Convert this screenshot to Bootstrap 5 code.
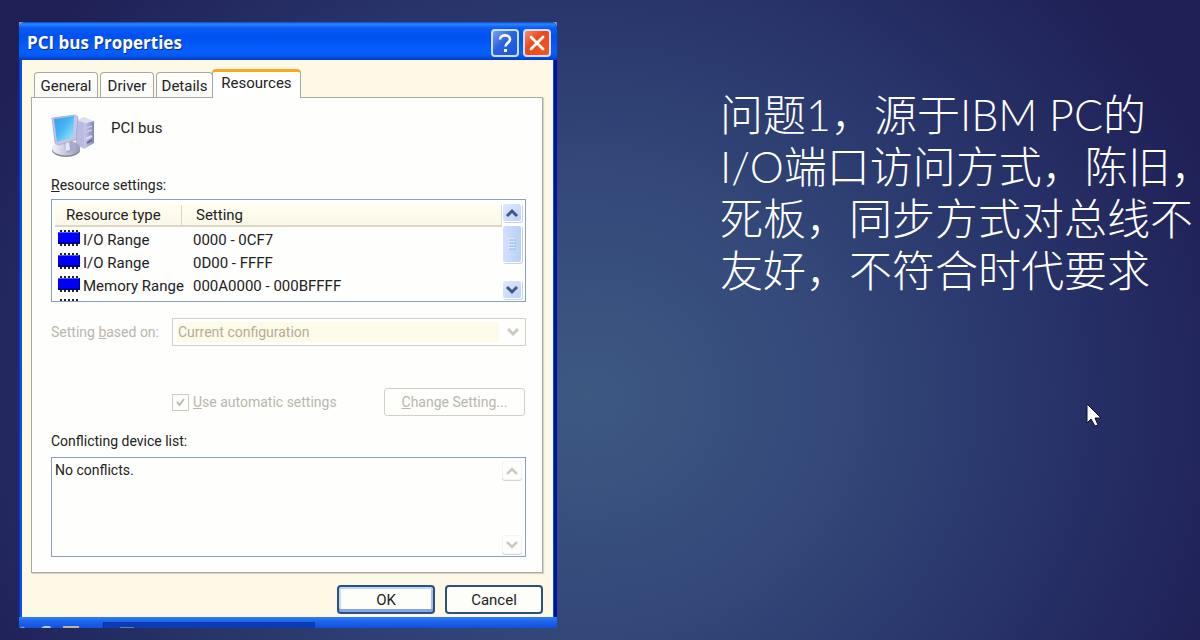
<!DOCTYPE html>
<html lang="zh-CN">
<head>
<meta charset="utf-8">
<meta name="viewport" content="width=device-width, initial-scale=1">
<title>PCI bus Properties</title>
<link rel="stylesheet" href="https://cdn.jsdelivr.net/npm/bootstrap@5.3.0/dist/css/bootstrap.min.css">
<style>
body{font-family:Roboto,"Noto Sans CJK SC",sans-serif;font-size:14px;line-height:20px;color:#222;min-height:100vh;
 background:radial-gradient(ellipse 56% 95% at 49% 62%,#3d5982 0%,#34497a 35%,#28346a 68%,#1f2056 100%) #1f2056}
.slide{display:grid;grid-template-columns:minmax(0,557fr) minmax(0,643fr);min-height:100vh}
.dialog-wrap{padding:22px 0 12px 19px}
.xp-frame{background:#0a50e8;box-shadow:inset 1px 0 #0a35d0,inset -3px 0 #0010a0;border-radius:7px 7px 0 0}
.xp-back{background:#6f8fd0}
.xp-title{height:38px;padding:4px 6px 0 8px;border-radius:7px 7px 0 0;color:#fff;
 background:linear-gradient(#0a48c8 0,#2a86ff 2px,#0a5cf4 6px,#0050f0 14px,#0560ff 30px,#0458f4 34px,#0838b8 38px);text-shadow:1px 1px #0a2a90}
.xp-title h1{font:bold 17px/24px "Open Sans","Noto Sans",sans-serif;margin:0}
.cap-btn{width:28px;height:28px;border:2px solid #cfe0ff;border-radius:4px;padding:0;display:flex;align-items:center;justify-content:center;background:linear-gradient(135deg,#7aa0f5,#2a62e0 45%,#1c55dd)}
.cap-close{background:linear-gradient(135deg,#f09070,#ea4a1c 40%,#f4561a)}
.xp-body{margin:0 4px 0 3px;padding:9px 10px 3px 9px;background:#fdf9e6}
.xp-tabs{border:0;padding-left:3px;align-items:flex-end;gap:2px;font-size:15px}
.xp-tabs .nav-link{border:1px solid #a9a9a2;border-bottom:0;border-radius:4px 4px 0 0;background:linear-gradient(#fff,#fafaf6);color:#222;padding:3px 0 1px;height:25px;margin:0;text-align:center}
.xp-tabs .nav-link.active{height:29px;margin:0 0 -1px -3px;border:1px solid #a9a9a2;border-top:3px solid #f8a81c;border-bottom:0;background:#fff;padding:1px 0 4px;color:#222;position:relative}
.w-a{width:64px}.w-b{width:54px}.w-c{width:57px}.w-d{width:89px}
.xp-panel{background:#fefefd;border:1px solid #a9a9a2;box-shadow:1px 1px 1px #d8d4c8;padding:15px 16px 15px 19px}
.dev-row{height:62px}
.dev-name{padding:5px 0 0 15px;font-size:15px}
.list-box{border:1px solid #8a9fc4;height:103px;overflow:hidden;background:#fefefd;font-size:15px}
.res-table{width:100%;table-layout:fixed;border-collapse:separate;border-spacing:0;margin:2px 0 0 3px}
.col-kind{width:127px}
.res-table th{font-weight:400;height:25px;padding:2px 0 0 14px;background:linear-gradient(#fffef2,#fbf8e8);border-bottom:2px solid #dcd8c4}
.res-table th:first-child{padding-left:11px}
.res-table th span{display:block;border-right:1px solid #dcd8c8;line-height:20px}
.res-table td{height:23px;padding:2px 0 0 11px;white-space:nowrap;line-height:20px}
.res-table td:first-child{padding-left:3px}
.chip{width:22px;height:18px;display:inline-block;vertical-align:-2px;margin-right:3px}
.sb{width:21px;margin:3px 2px 2px 0}
.sb-btn{width:20px;height:19px;padding:0;border:1px solid #fff;border-radius:3px;background:linear-gradient(135deg,#dfe9ff,#bcd2fb);box-shadow:1px 1px #c4d4f0;display:flex;align-items:center;justify-content:center}
.sb-thumb{height:38px;margin-top:3px;background:linear-gradient(90deg,#d2e0fd,#b8d0fa)}
.sb-off{background:#fdfdfb;border-color:#f5f4f0;box-shadow:0 1px #d8d6cc}
.off-text{color:#b9b7ac}
.based-label{width:121px}
.combo{flex:1;height:28px;border:1px solid #d4d1c4;padding:3px 26px 3px 5px;font:inherit;color:#b3ae96;opacity:1;appearance:none;border-radius:0;
 background:url("data:image/svg+xml,%3Csvg xmlns='http://www.w3.org/2000/svg' viewBox='0 0 12 8'%3E%3Cpath d='M1 1l5 5 5-5' fill='none' stroke='%23cbc9c0' stroke-width='3'/%3E%3C/svg%3E") right 6px center/12px 8px no-repeat,linear-gradient(#fdfaea,#fdfaea) 4px 3px/calc(100% - 30px) 20px no-repeat,#fefefd}
.auto-row{margin:42px 1px 0 121px}
.tick{appearance:none;width:17px;height:17px;margin:0 4px 0 0;border:1px solid #cfcdc2;background:url("data:image/svg+xml,%3Csvg xmlns='http://www.w3.org/2000/svg' viewBox='0 0 11 11'%3E%3Cpath d='M2 5l2.500 3L9 2' fill='none' stroke='%23bdbbb0' stroke-width='2'/%3E%3C/svg%3E") center/11px no-repeat}
.change-btn{width:141px;height:28px;border:1px solid #d4d1c4;border-radius:3px;background:#fefefc;color:#b9b7ac;padding:0}
.conf-label{margin:15px 0 6px}
.conf-box{border:1px solid #8a9fc4;height:100px;background:#fefefd}
.conf-box textarea{border:0;resize:none;background:none;padding:2px 3px;overflow:hidden;font:inherit;line-height:20px;color:#222}
.ok-row{gap:10px;padding:12px 0 0}
.dlg-btn{width:98px;height:29px;padding:0;border:2px solid #2c5080;border-radius:4px;background:#fdfdfa;color:#222;font-size:15px}
.dlg-ok{box-shadow:inset 0 2px #bcd8fa,inset 0 -3px #88a4ec,inset 2px 0 #c4dafa,inset -2px 0 #a4bcf0}
.taskbar-strip{height:11px;background:linear-gradient(#2f80f8,#1e66ee 4px,#1250dc);overflow:hidden}
.task-item{width:212px;height:7px;margin:5px 0 0 12px;background:#0a3cb4;border-left:1px solid #082c90}
.copy{padding:89px 0 0 163px;color:#fff}
.copy p{font-family:Lato,"Noto Sans CJK SC",sans-serif;font-weight:300;font-size:43px;line-height:52px;white-space:nowrap;margin:0}
.line-end{font-feature-settings:"halt"}
.pointer{position:absolute;left:90.5%;top:403px;width:15px;height:25px}
</style>
</head>
<body>
<main class="slide">
<section class="dialog-wrap">
 <div class="xp-back">
 <div class="xp-frame">
  <header class="xp-title d-flex align-items-center">
   <h1 class="flex-grow-1">PCI bus Properties</h1>
   <div class="d-flex gap-1">
   <button class="cap-btn" aria-label="Help"><svg width="18" height="20" viewBox="0 0 18 20"><path d="M4 6.500C4 1 14 1 14 6.500c0 3-4.500 3.500-4.500 7" fill="none" stroke="#fff" stroke-width="2.600"/><rect x="8" y="16" width="3" height="3" fill="#fff"/></svg></button>
   <button class="cap-btn cap-close" aria-label="Close"><svg width="18" height="18" viewBox="0 0 18 18"><path d="M3 3l12 12M15 3L3 15" stroke="#fff" stroke-width="2.800" stroke-linecap="round"/></svg></button>
   </div>
  </header>
  <div class="xp-body">
   <ul class="nav nav-tabs xp-tabs">
    <li><a class="nav-link w-a" href="#">General</a></li>
    <li><a class="nav-link w-b" href="#">Driver</a></li>
    <li><a class="nav-link w-c" href="#">Details</a></li>
    <li><a class="nav-link active w-d" href="#">Resources</a></li>
   </ul>
   <div class="xp-panel">
    <div class="dev-row d-flex align-items-start">
     <svg width="45" height="46" viewBox="0 0 45 44">
      <defs><linearGradient id="scr" x2="1" y2="1"><stop stop-color="#3b9de8"/><stop offset=".45" stop-color="#45b4f4"/><stop offset="1" stop-color="#a4f0fa"/></linearGradient>
      <linearGradient id="twr"><stop stop-color="#c9cbea"/><stop offset="1" stop-color="#8284b8"/></linearGradient>
      <linearGradient id="ft"><stop stop-color="#f4f4fa"/><stop offset="1" stop-color="#9698be"/></linearGradient></defs>
      <path d="M26 6l7-3 10 4-9 4z" fill="#dedff2"/><path d="M25 6l9 3v26l-9-4z" fill="#b9bbe0"/><path d="M33 10l10-3v22l-10 6z" fill="url(#twr)"/>
      <path d="M35 14l6-2M35 18l6-2" stroke="#c6c8ea" stroke-width="1.500"/><path d="M35 25l6-3" stroke="#dadcf4" stroke-width="2"/><path d="M36 29l5-3" stroke="#5d5f93" stroke-width="1.500"/>
      <ellipse cx="15" cy="36" rx="14" ry="7" fill="#85868f"/><ellipse cx="15" cy="34" rx="14" ry="7.500" fill="url(#ft)"/>
      <path d="M12 26l9-1 2 11-7 3z" fill="#a6a8cf"/><path d="M14 27l4-1 1 10-4 1z" fill="#e5e6f4"/>
      <path d="M1 4l23-3 3 2-2 23-18 5-3-2z" fill="#c3c6e4" stroke="#a1a4c6" stroke-width=".7"/><path d="M3 5l20-3-1 21-16 5z" fill="url(#scr)"/>
     </svg>
     <span class="dev-name">PCI bus</span>
    </div>
    <label class="d-block mb-1"><u>R</u>esource settings:</label>
    <div class="list-box d-flex">
     <table class="res-table">
      <colgroup><col class="col-kind"><col></colgroup>
      <thead><tr><th><span>Resource type</span></th><th><span>Setting</span></th></tr></thead>
      <tbody>
       <tr><td><svg class="chip"><use href="#chip"/></svg>I/O Range</td><td>0000 - 0CF7</td></tr>
       <tr><td><svg class="chip"><use href="#chip"/></svg>I/O Range</td><td>0D00 - FFFF</td></tr>
       <tr><td><svg class="chip"><use href="#chip"/></svg>Memory Range</td><td>000A0000 - 000BFFFF</td></tr>
       <tr><td><svg class="chip"><use href="#chip"/></svg></td><td></td></tr>
      </tbody>
     </table>
     <div class="sb d-flex flex-column flex-shrink-0">
      <button class="sb-btn" aria-label="Scroll up"><svg width="14" height="10" viewBox="0 0 14 10"><path d="M2 8l5-5 5 5" fill="none" stroke="#3f5888" stroke-width="3"/></svg></button>
      <div class="sb-btn sb-thumb"><svg width="10" height="12" viewBox="0 0 10 12"><path d="M1 1h7M1 4h7M1 7h7M1 10h7" stroke="#f2f7ff"/><path d="M2 2h7M2 5h7M2 8h7M2 11h7" stroke="#95b4ea"/></svg></div>
      <button class="sb-btn mt-auto" aria-label="Scroll down"><svg width="14" height="10" viewBox="0 0 14 10"><path d="M2 2l5 5 5-5" fill="none" stroke="#3f5888" stroke-width="3"/></svg></button>
     </div>
    </div>
    <div class="d-flex align-items-center mt-3">
     <label class="off-text based-label" for="based">Setting <u>b</u>ased on:</label>
     <select id="based" class="combo" disabled><option>Current configuration</option></select>
    </div>
    <div class="d-flex align-items-center justify-content-between auto-row">
     <label class="off-text d-flex align-items-center" for="auto"><input id="auto" class="tick" type="checkbox" checked disabled><span><u>U</u>se automatic settings</span></label>
     <button class="change-btn" disabled><u>C</u>hange Setting...</button>
    </div>
    <label class="d-block conf-label" for="conf">Conflicting device list:</label>
    <div class="conf-box d-flex">
     <textarea id="conf" class="flex-grow-1" readonly>No conflicts.</textarea>
     <div class="sb d-flex flex-column">
      <button class="sb-btn sb-off" disabled aria-label="Scroll up"><svg width="14" height="10" viewBox="0 0 14 10"><path d="M2 8l5-5 5 5" fill="none" stroke="#cccac2" stroke-width="2.500"/></svg></button>
      <button class="sb-btn sb-off mt-auto" disabled aria-label="Scroll down"><svg width="14" height="10" viewBox="0 0 14 10"><path d="M2 2l5 5 5-5" fill="none" stroke="#cccac2" stroke-width="2.500"/></svg></button>
     </div>
    </div>
   </div>
   <div class="d-flex justify-content-end ok-row">
    <button class="dlg-btn dlg-ok">OK</button>
    <button class="dlg-btn">Cancel</button>
   </div>
  </div>
  <div class="taskbar-strip d-flex">
   <svg width="72" height="11" viewBox="0 0 72 11"><path d="M22 11l3-2h6l1 2z" fill="#a8ccff"/><path d="M1 11q3-3 5 0" fill="#6fa4f4"/><rect x="44" y="9" width="16" height="3" fill="#b8b6a8"/></svg>
   <div class="task-item"><svg width="30" height="7" class="d-block"><rect x="16" y="5" width="14" height="2" fill="#5c7cb0"/></svg></div>
  </div>
 </div>
 </div>
</section>
<section class="copy">
 <p>问题1，源于IBM PC的<br>I/O端口访问方式，陈旧<span class="line-end">，</span><br>死板，同步方式对总线不<br>友好，不符合时代要求</p>
</section>
</main>
<svg class="pointer" viewBox="0 0 15 25"><path d="M1 1v19l4-4 4 7 3-1-3-7h6z" fill="#fff" stroke="#0c1030"/></svg>
<svg width="0" height="0" class="position-absolute"><symbol id="chip" viewBox="0 0 22 18"><path d="M3 1v16M7 1v16M11 1v16M15 1v16M19 1v16" stroke="#222" stroke-width="2"/><rect x="0" y="3" width="22" height="12" fill="#000090"/><rect x="0" y="3" width="21" height="10" fill="#0000fa"/><path d="M0 3.500h21" stroke="#4b5cff"/></symbol></svg>
<script src="https://cdn.jsdelivr.net/npm/bootstrap@5.3.0/dist/js/bootstrap.bundle.min.js"></script>
</body>
</html>
